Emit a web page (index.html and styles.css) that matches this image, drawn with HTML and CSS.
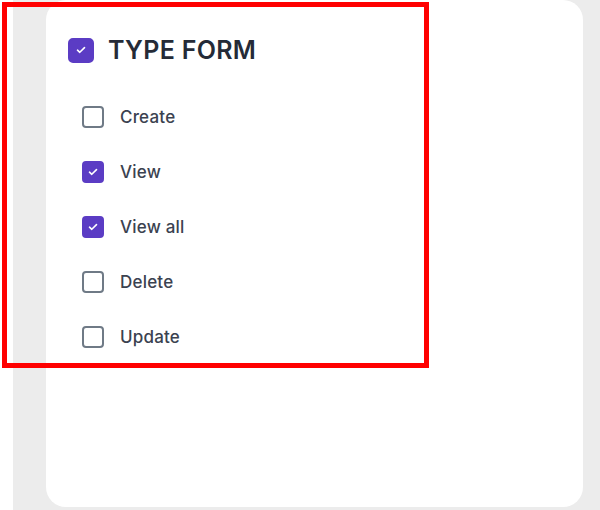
FILE: index.html
```html
<!DOCTYPE html>
<html>
<head>
<meta charset="utf-8">
<link rel="stylesheet" href="styles.css">
</head>
<body>
<div class="stage">
  <div class="card">
    <div class="group-head">
      <span class="cb cb-lg checked">
        <svg viewBox="0 0 10 8" width="10" height="8"><path d="M1.5 4.2 L3.8 6.3 L8.5 1.6" fill="none" stroke="#fff" stroke-width="1.6" stroke-linecap="round" stroke-linejoin="round"/></svg>
      </span>
      <span class="group-title">TYPE FORM</span>
    </div>
    <ul class="perm-list">
      <li class="perm"><span class="cb"></span><span class="perm-label">Create</span></li>
      <li class="perm"><span class="cb checked"><svg viewBox="0 0 10 8" width="10" height="8"><path d="M1.5 4.2 L3.8 6.3 L8.5 1.6" fill="none" stroke="#fff" stroke-width="1.6" stroke-linecap="round" stroke-linejoin="round"/></svg></span><span class="perm-label">View</span></li>
      <li class="perm"><span class="cb checked"><svg viewBox="0 0 10 8" width="10" height="8"><path d="M1.5 4.2 L3.8 6.3 L8.5 1.6" fill="none" stroke="#fff" stroke-width="1.6" stroke-linecap="round" stroke-linejoin="round"/></svg></span><span class="perm-label">View all</span></li>
      <li class="perm"><span class="cb"></span><span class="perm-label">Delete</span></li>
      <li class="perm"><span class="cb"></span><span class="perm-label">Update</span></li>
    </ul>
  </div>
</div>
<div class="highlight"></div>
</body>
</html>
```

FILE: styles.css
```css
* { box-sizing: border-box; }
html, body {
  margin: 0;
  padding: 0;
  width: 600px;
  height: 510px;
  overflow: hidden;
  background: #ffffff;
  font-family: Inter, "Noto Sans", sans-serif;
}
.stage {
  margin-left: 13px;
  height: 510px;
  background: #ececec;
  padding: 0 17px 3px 33px;
  display: flex;
}
.card {
  flex: 1;
  background: #ffffff;
  border-radius: 20px;
  padding: 35px 22px 0 22px;
}
.group-head {
  display: flex;
  align-items: center;
  gap: 14px;
}
.cb {
  width: 22px;
  height: 22px;
  border-radius: 4px;
  border: 2px solid #6f7a86;
  display: flex;
  align-items: center;
  justify-content: center;
  flex: none;
}
.cb.checked {
  background: #5b3cc4;
  border-color: #5b3cc4;
}
.cb-lg {
  width: 26px;
  height: 25px;
  border-radius: 5px;
}
.group-title {
  font-size: 25px;
  font-weight: 600;
  color: #252b37;
  letter-spacing: 0.3px;
}
.perm-list {
  list-style: none;
  margin: 24px 0 0 0;
  padding: 0 0 0 14px;
}
.perm {
  height: 55px;
  display: flex;
  align-items: center;
  gap: 16px;
}
.perm-label {
  font-size: 17px;
  font-weight: 500;
  color: #3b4250;
  letter-spacing: 0.2px;
}
.highlight {
  position: absolute;
  left: 2px;
  top: 2px;
  width: 427px;
  height: 366px;
  border: 5px solid #ff0000;
  pointer-events: none;
}
```
